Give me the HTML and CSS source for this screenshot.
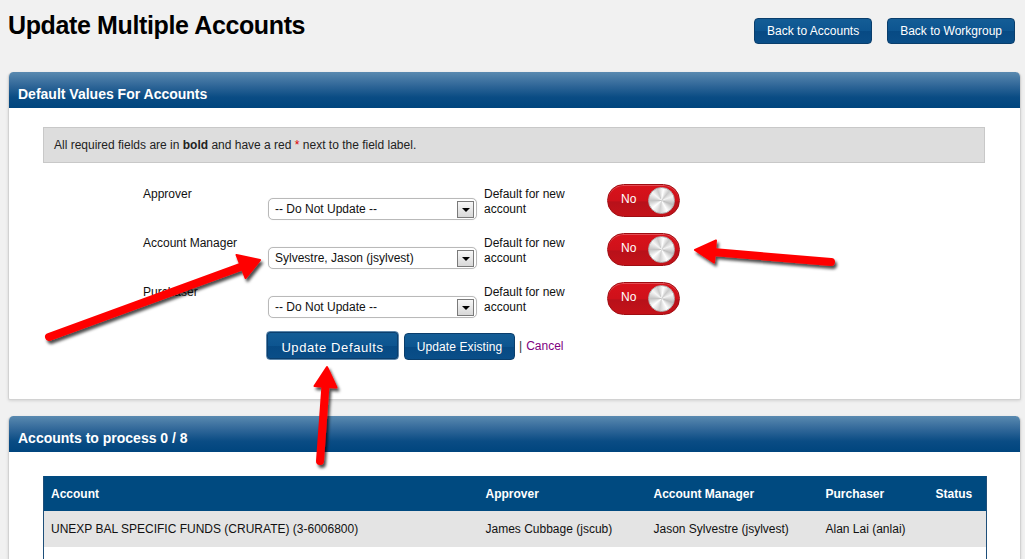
FILE: index.html
```html
<!DOCTYPE html>
<html>
<head>
<meta charset="utf-8">
<title>Update Multiple Accounts</title>
<link rel="stylesheet" href="styles.css">
</head>
<body>
<div class="page">
  <header class="top">
    <h1 class="title">Update Multiple Accounts</h1>
    <div class="top-actions">
      <button class="btn btn-top">Back to Accounts</button>
      <button class="btn btn-top">Back to Workgroup</button>
    </div>
  </header>

  <section class="panel">
    <div class="panel-head">Default Values For Accounts</div>
    <div class="panel-body">
      <div class="info">All required fields are in <b>bold</b> and have a red <span class="req">*</span> next to the field label.</div>
      <div class="form">
        <div class="row">
          <div class="label">Approver</div>
          <div class="select"><span class="select-text">-- Do Not Update --</span><span class="select-arrow"><span class="tri"></span></span></div>
          <div class="default-text">Default for new<br>account</div>
          <div class="toggle"><span class="toggle-text">No</span><span class="knob"></span></div>
        </div>
        <div class="row">
          <div class="label">Account Manager</div>
          <div class="select"><span class="select-text">Sylvestre, Jason (jsylvest)</span><span class="select-arrow"><span class="tri"></span></span></div>
          <div class="default-text">Default for new<br>account</div>
          <div class="toggle"><span class="toggle-text">No</span><span class="knob"></span></div>
        </div>
        <div class="row">
          <div class="label">Purchaser</div>
          <div class="select"><span class="select-text">-- Do Not Update --</span><span class="select-arrow"><span class="tri"></span></span></div>
          <div class="default-text">Default for new<br>account</div>
          <div class="toggle"><span class="toggle-text">No</span><span class="knob"></span></div>
        </div>
        <div class="actions">
          <button class="btn btn-main btn-focus">Update Defaults</button>
          <button class="btn btn-main btn-existing">Update Existing</button>
          <span class="sep">|</span><a class="cancel" href="#">Cancel</a>
        </div>
      </div>
    </div>
  </section>

  <section class="panel panel-accounts">
    <div class="panel-head">Accounts to process 0 / 8</div>
    <div class="panel-body panel-body-table">
      <table class="grid">
        <colgroup>
          <col class="c1"><col class="c2"><col class="c3"><col class="c4"><col class="c5">
        </colgroup>
        <thead>
          <tr><th>Account</th><th>Approver</th><th>Account Manager</th><th>Purchaser</th><th>Status</th></tr>
        </thead>
        <tbody>
          <tr class="odd"><td>UNEXP BAL SPECIFIC FUNDS (CRURATE) (3-6006800)</td><td>James Cubbage (jscub)</td><td>Jason Sylvestre (jsylvest)</td><td>Alan Lai (anlai)</td><td></td></tr>
          <tr><td></td><td></td><td></td><td></td><td></td></tr>
          <tr class="odd"><td></td><td></td><td></td><td></td><td></td></tr>
        </tbody>
      </table>
    </div>
  </section>
</div>

<svg class="annotations" width="1025" height="559" viewBox="0 0 1025 559">
  <defs>
    <filter id="shadow" x="-20%" y="-20%" width="140%" height="140%">
      <feDropShadow dx="2" dy="3" stdDeviation="1.8" flood-color="#000" flood-opacity="0.7"/>
    </filter>
  </defs>
  <g filter="url(#shadow)" fill="#ff0000" stroke="#ff0000">
    <line x1="49" y1="337" x2="243" y2="266" stroke-width="8" stroke-linecap="round"/>
    <polygon points="260,260 245.5,278 236.5,255" stroke-width="2" stroke-linejoin="round"/>

    <line x1="831" y1="262" x2="713" y2="252" stroke-width="8" stroke-linecap="round"/>
    <polygon points="695,250 714,262.5 716,240.5" stroke-width="2" stroke-linejoin="round"/>

    <line x1="320" y1="461" x2="325.5" y2="385" stroke-width="8" stroke-linecap="round"/>
    <polygon points="327,367 336.5,387.5 314.5,386" stroke-width="2" stroke-linejoin="round"/>
  </g>
</svg>
</body>
</html>
```

FILE: styles.css
```css
html, body {
  margin: 0;
  padding: 0;
  overflow: hidden;
}

body {
  background: #f1f1f1;
  font-family: "Liberation Sans", Arial, sans-serif;
  font-size: 12px;
  color: #111;
  width: 1025px;
  height: 559px;
  position: relative;
}

.page {
  padding: 0 4px 0 8px;
}

.top {
  display: flex;
  justify-content: space-between;
  align-items: flex-start;
  height: 72px;
}

.title {
  margin: 10px 0 0 0;
  font-size: 25px;
  line-height: 30px;
  font-weight: bold;
  color: #000;
  letter-spacing: -0.37px;
}

.top-actions {
  display: flex;
  gap: 15px;
  margin-top: 18px;
  margin-right: 6px;
}

.btn {
  font-family: "Liberation Sans", Arial, sans-serif;
  color: #fff;
  background: linear-gradient(#145d96 0%, #0d5590 50%, #074a84 51%, #0a4e88 100%);
  border: 1px solid #0a3e6c;
  border-radius: 4px;
  cursor: pointer;
  padding: 0;
}

.btn-top {
  height: 26px;
  font-size: 12px;
  padding: 0 12px;
}

.panel {
  background: #fff;
  border: 1px solid #d2d2d2;
  border-top: none;
  border-radius: 5px 5px 2px 2px;
  box-shadow: 0 1px 3px rgba(0, 0, 0, 0.12);
  overflow: hidden;
}

.panel-head {
  height: 36px;
  box-sizing: border-box;
  padding: 14px 0 0 10px;
  background: linear-gradient(#5a8ab0 0%, #33699a 35%, #0a4c84 70%, #00457e 100%);
  color: #fff;
  font-weight: bold;
  font-size: 14px;
  line-height: 17px;
  margin: 0 -1px;
  border-radius: 5px 5px 0 0;
}

.panel-body {
  padding: 19px 35px 39px 34px;
}

.info {
  height: 36px;
  box-sizing: border-box;
  background: #dddddd;
  border: 1px solid #c8c8c8;
  padding: 0 10px;
  line-height: 34px;
  font-size: 12px;
  color: #222;
}

.req {
  color: #d00;
}

.form {
  margin-top: 21px;
  padding-left: 100px;
}

.row {
  display: flex;
  align-items: flex-start;
  height: 49px;
}

.label {
  width: 125px;
  margin-top: 3px;
  line-height: 15px;
  color: #111;
}

.select {
  width: 209px;
  height: 22px;
  box-sizing: border-box;
  margin-top: 14px;
  border: 1px solid #b9b9b9;
  border-radius: 5px;
  background: #fff;
  box-shadow: 0 0 1px rgba(0, 0, 0, 0.15);
  display: flex;
  align-items: center;
  justify-content: space-between;
  padding: 0 2px 0 6px;
}

.select-text {
  font-size: 12px;
  color: #111;
}

.select-arrow {
  width: 17px;
  height: 17px;
  box-sizing: border-box;
  border: 1px solid #7a7a7a;
  background: linear-gradient(#f7f7f7, #d8d8d8);
  display: flex;
  align-items: center;
  justify-content: center;
}

.tri {
  width: 0;
  height: 0;
  border-left: 4px solid transparent;
  border-right: 4px solid transparent;
  border-top: 4px solid #000;
  margin-top: 2px;
}

.default-text {
  width: 123px;
  margin-left: 7px;
  margin-top: 3px;
  line-height: 15px;
  color: #111;
}

.toggle {
  width: 73px;
  height: 33px;
  box-sizing: border-box;
  border-radius: 17px;
  border: 1px solid #a00d12;
  background: linear-gradient(#d9121b 0%, #cf111a 50%, #b8111a 55%, #c41219 100%);
  box-shadow: inset 0 1px 0 rgba(255, 255, 255, 0.25);
  display: flex;
  align-items: center;
  justify-content: space-between;
  padding: 0 4px 0 13px;
}

.toggle-text {
  color: #fff;
  font-size: 12px;
  margin-bottom: 4px;
}

.knob {
  width: 27px;
  height: 27px;
  box-sizing: border-box;
  border-radius: 50%;
  border: 1px solid #b0b0b0;
  background: conic-gradient(from 10deg, #ffffff, #c9c9c9 30deg, #f4f4f4 60deg, #bdbdbd 100deg, #ffffff 140deg, #cfcfcf 180deg, #ffffff 220deg, #c4c4c4 260deg, #f7f7f7 300deg, #cacaca 330deg, #ffffff);
}

.actions {
  display: flex;
  align-items: flex-end;
  margin-left: 123px;
  height: 29px;
}

.btn-main {
  height: 27px;
  margin-right: 5px;
}

.btn-focus {
  height: 29px;
  width: 133px;
  font-size: 13px;
  letter-spacing: 0.6px;
  padding-top: 3px;
  border: 1px solid #5d86aa;
  box-shadow: inset 0 0 0 1px #0b3f6e;
}

.btn-existing {
  width: 111px;
  font-size: 12px;
  letter-spacing: 0.1px;
}

.sep {
  color: #333;
  font-size: 12px;
  line-height: 28px;
  margin-left: -1px;
  margin-right: 4px;
}

.cancel {
  color: #800080;
  text-decoration: none;
  font-size: 12px;
  line-height: 28px;
}

.panel-accounts {
  margin-top: 16px;
}

.panel-body-table {
  padding: 24px 35px 20px 34px;
}

.grid {
  width: 943px;
  border-collapse: collapse;
  table-layout: fixed;
  border-left: 1px solid #1e4f7a;
  border-right: 1px solid #1e4f7a;
}

.c1 { width: 435px; }
.c2 { width: 168px; }
.c3 { width: 172px; }
.c4 { width: 110px; }
.c5 { width: 58px; }

.grid th {
  background: #004a80;
  color: #fff;
  font-weight: bold;
  font-size: 12px;
  text-align: left;
  height: 34px;
  padding: 1px 7px 0 7px;
}

.grid td {
  height: 36px;
  padding: 0 7px;
  font-size: 12px;
  color: #111;
}

.grid tr.odd td {
  background: #e4e4e4;
}

.annotations {
  position: absolute;
  left: 0;
  top: 0;
  pointer-events: none;
}
```
